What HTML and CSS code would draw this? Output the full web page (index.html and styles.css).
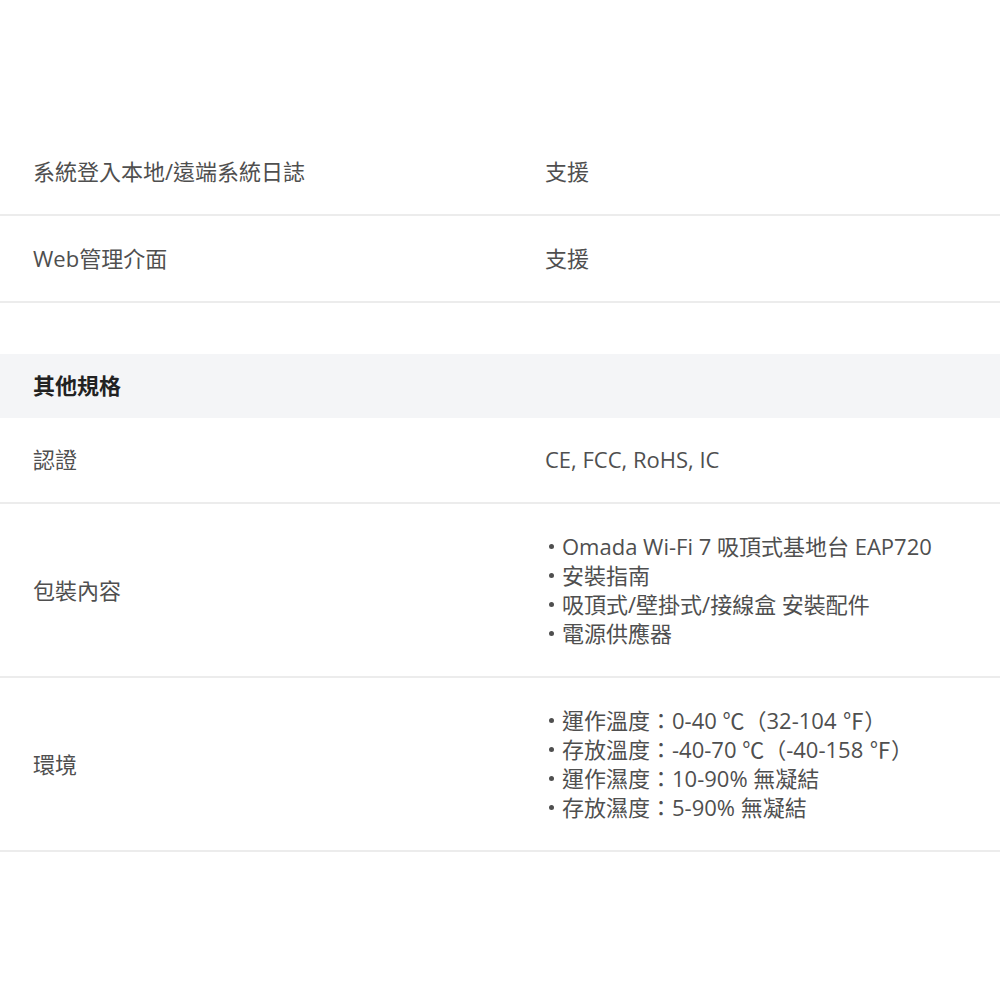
FILE: index.html
```html
<!DOCTYPE html>
<html lang="zh-Hant">
<head>
<meta charset="utf-8">
<link rel="stylesheet" href="styles.css">
</head>
<body>
<div class="spec">
  <div class="group">
    <div class="row"><div class="label">系統登入本地/遠端系統日誌</div><div class="value">支援</div></div>
    <div class="row"><div class="label">Web管理介面</div><div class="value">支援</div></div>
  </div>
  <div class="group">
    <div class="head">其他規格</div>
    <div class="row"><div class="label">認證</div><div class="value">CE, FCC, RoHS, IC</div></div>
    <div class="row">
      <div class="label">包裝內容</div>
      <ul class="value list">
        <li>Omada Wi-Fi 7 吸頂式基地台 EAP720</li>
        <li>安裝指南</li>
        <li>吸頂式/壁掛式/接線盒 安裝配件</li>
        <li>電源供應器</li>
      </ul>
    </div>
    <div class="row">
      <div class="label">環境</div>
      <ul class="value list">
        <li>運作溫度：0-40 ℃（32-104 ℉）</li>
        <li>存放溫度：-40-70 ℃（-40-158 ℉）</li>
        <li>運作濕度：10-90% 無凝結</li>
        <li>存放濕度：5-90% 無凝結</li>
      </ul>
    </div>
  </div>
</div>
</body>
</html>
```

FILE: styles.css
```css
html, body {
  margin: 0;
  padding: 0;
  background: #ffffff;
}
body {
  font-family: "Open Sans", "Noto Sans CJK TC", sans-serif;
  font-size: 22px;
  line-height: 29px;
  color: #4f4f4f;
}
.spec {
  padding-top: 129px;
  display: flex;
  flex-direction: column;
  gap: 51px;
}
.row {
  display: grid;
  grid-template-columns: 512px 1fr;
  align-items: center;
  padding: 28px 0 28px 33px;
  border-bottom: 2px solid #ececec;
}
.head {
  background: #f4f5f7;
  padding: 17px 33px 18px;
  font-weight: 700;
  color: #222222;
  font-size: 22px;
}
.head + .row {
  padding-top: 27px;
}
.value {
  margin: 0;
}
.list {
  list-style: none;
  padding: 0;
}
.list li {
  display: flex;
  align-items: center;
  gap: 8px;
}
.list li::before {
  content: "";
  width: 5px;
  height: 5px;
  margin-left: 4px;
  border-radius: 50%;
  background: #4f4f4f;
  flex: none;
}
```
